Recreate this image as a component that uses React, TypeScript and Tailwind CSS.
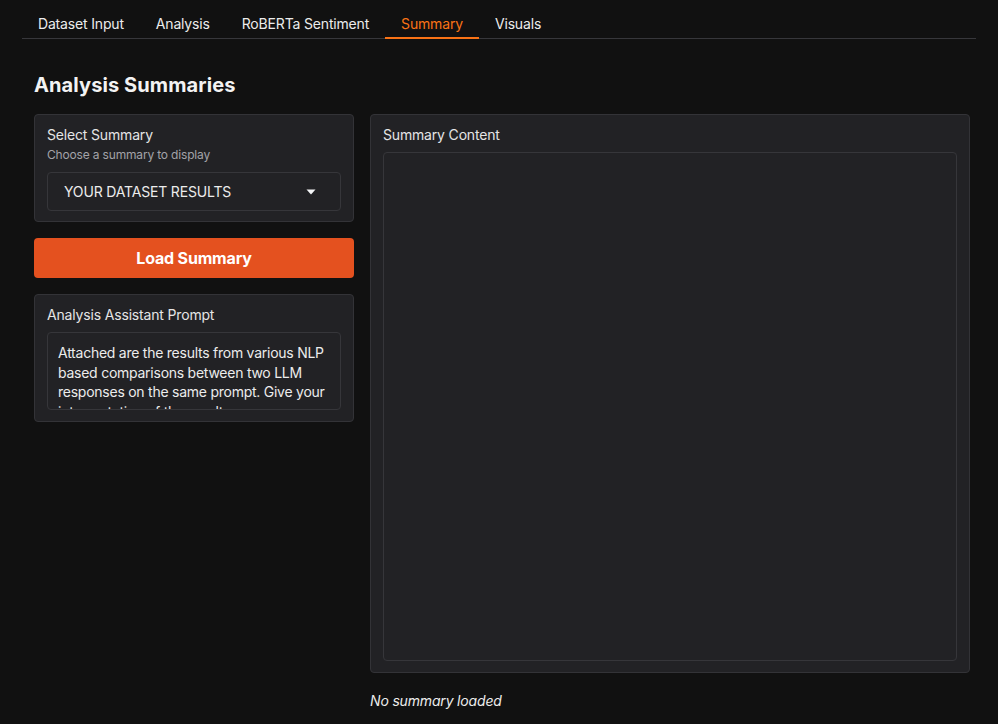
import React from "react";

const font = { fontFamily: "Inter, 'Noto Sans', sans-serif", letterSpacing: "-0.17px" };

function Caret() {
  return (
    <svg width="10" height="6" viewBox="0 0 10 6" className="fill-gray-100">
      <path d="M0.5 0.5 L9.5 0.5 L5 5.5 Z" />
    </svg>
  );
}

export default function App() {
  const tabs = ["Dataset Input", "Analysis", "RoBERTa Sentiment", "Summary", "Visuals"];
  return (
    <div className="min-h-[724px] w-full bg-[#111111] text-[#e5e5e5]" style={font}>
      <div className="px-[22px] pt-[14px]">
        <div className="flex border-b border-[#37373b]">
          {tabs.map((t) => (
            <div
              key={t}
              className={
                "px-4 pb-[3px] text-[14px] leading-[20px] -mb-px border-b-2 " +
                (t === "Summary"
                  ? "text-[#f97316] border-[#f97316]"
                  : "text-[#ececec] border-transparent")
              }
            >
              {t}
            </div>
          ))}
        </div>
      </div>
      <div className="pl-[34px] pt-[32px]">
        <h1 className="text-[20px] font-bold leading-[28px] tracking-[0.1px] text-[#f3f3f3]">Analysis Summaries</h1>
        <div className="mt-[15px] flex w-[936px] gap-4">
          <div className="flex w-[320px] shrink-0 flex-col gap-4">
            <div className="rounded-[4px] border border-[#333337] bg-[#222225] px-[12px] pt-[10px] pb-[10px]">
              <div className="text-[14px] leading-[20px] text-[#e5e5e5]">Select Summary</div>
              <div className="text-[12px] leading-[16px] text-[#a3a3a8] mt-[2px]">Choose a summary to display</div>
              <div className="mt-[9px] flex h-[39px] items-center justify-between rounded-[4px] border border-[#36363a] bg-[#222225] pl-[16px] pr-[24px]">
                <span className="text-[14px] text-[#ececec]">YOUR DATASET RESULTS</span>
                <Caret />
              </div>
            </div>
            <button className="h-[40px] w-full rounded-[4px] bg-[#e4511f] text-[16px] font-bold text-white">
              Load Summary
            </button>
            <div className="rounded-[4px] border border-[#333337] bg-[#222225] px-[12px] pt-[10px] pb-[11px]">
              <div className="text-[14px] leading-[20px] text-[#e5e5e5]">Analysis Assistant Prompt</div>
              <div className="mt-[7px] h-[78px] overflow-hidden rounded-[4px] border border-[#36363a] bg-[#222225] pl-[10px] pr-[6px] pt-[10px]">
                <p className="text-[14px] leading-[19.5px] tracking-[-0.25px] text-[#ececec]">
                  Attached are the results from various NLP based comparisons between two LLM responses on the same prompt. Give your interpretation of the results.
                </p>
              </div>
            </div>
          </div>
          <div className="flex w-[600px] shrink-0 flex-col">
            <div className="flex h-[559px] flex-col rounded-[4px] border border-[#333337] bg-[#222225] px-[12px] pt-[10px] pb-[11px]">
              <div className="text-[14px] leading-[20px] text-[#e5e5e5]">Summary Content</div>
              <div className="mt-[7px] flex-1 rounded-[4px] border border-[#36363a] bg-[#222225]" />
            </div>
            <div className="mt-[17px] text-[14px] italic text-[#ececec]">No summary loaded</div>
          </div>
        </div>
      </div>
    </div>
  );
}
